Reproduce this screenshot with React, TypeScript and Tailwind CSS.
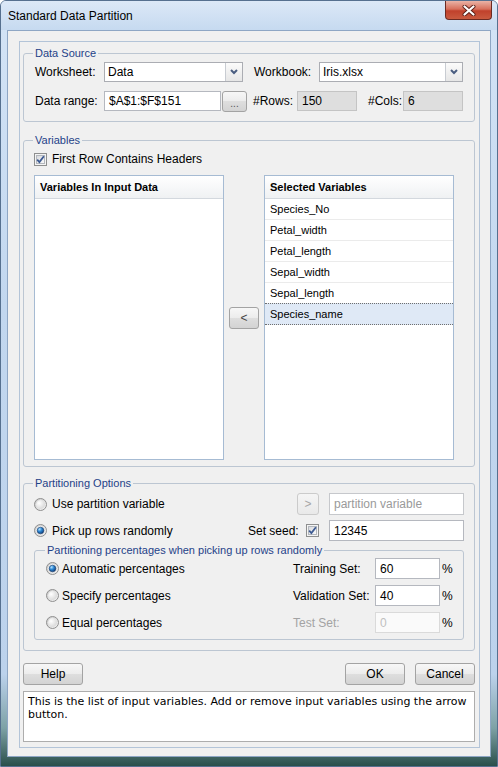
import React from "react";

function Radio({ checked }: { checked?: boolean }) {
  return (
    <svg width="13" height="13" viewBox="0 0 13 13" className="shrink-0">
      <defs>
        <linearGradient id="rbg" x1="0" y1="0" x2="1" y2="1">
          <stop offset="0" stopColor="#c9c9c9" />
          <stop offset="1" stopColor="#f6f6f6" />
        </linearGradient>
        <radialGradient id="rin" cx="0.35" cy="0.35" r="0.7">
          <stop offset="0" stopColor="#ffffff" />
          <stop offset="1" stopColor="#d9d9d9" />
        </radialGradient>
        <radialGradient id="rdot" cx="0.35" cy="0.3" r="0.75">
          <stop offset="0" stopColor="#b8e4ff" />
          <stop offset="0.45" stopColor="#2f8ad6" />
          <stop offset="1" stopColor="#0b3a78" />
        </radialGradient>
      </defs>
      <circle cx="6.5" cy="6.5" r="6" fill="url(#rbg)" stroke="#8f8f8f" />
      <circle cx="6.5" cy="6.5" r="4.4" fill="url(#rin)" />
      {checked && (
        <circle cx="6.5" cy="6.5" r="3.3" fill="url(#rdot)" stroke="#1b3d6c" strokeWidth="0.6" />
      )}
    </svg>
  );
}

function Check() {
  return (
    <svg width="13" height="13" viewBox="0 0 13 13" className="shrink-0">
      <defs>
        <linearGradient id="cbg" x1="0" y1="0" x2="1" y2="1">
          <stop offset="0" stopColor="#d6d8dc" />
          <stop offset="1" stopColor="#fbfbfb" />
        </linearGradient>
      </defs>
      <rect x="0.5" y="0.5" width="12" height="12" fill="#f4f4f4" stroke="#8e8f8f" />
      <rect x="2.5" y="2.5" width="8" height="8" fill="url(#cbg)" stroke="#b3b7bd" />
      <path d="M3.2 6.6 L5.4 9 L9.9 3.3" fill="none" stroke="#3d5a92" strokeWidth="1.8" />
    </svg>
  );
}

function Chevron() {
  return (
    <svg width="8" height="6" viewBox="0 0 8 6">
      <path d="M1 1 L4 4 L7 1" fill="none" stroke="#4a5d80" strokeWidth="2" />
    </svg>
  );
}

function Select({ className, value }: { className: string; value: string }) {
  return (
    <div className={`h-[20px] flex border border-[#abadb3] bg-white ${className}`}>
      <div className="flex-1 pl-[3px] leading-[18px]">{value}</div>
      <div className="w-[17px] h-full border-l border-[#c8ccd2] bg-[linear-gradient(to_bottom,#fbfbfb,#e6e6e6)] flex items-center justify-center">
        <Chevron />
      </div>
    </div>
  );
}

function Input({
  className,
  value,
  tone,
}: {
  className: string;
  value: string;
  tone?: "gray" | "placeholder" | "disabled";
}) {
  let cls = "bg-white border-[#b5b8bf] text-black";
  if (tone === "gray") cls = "bg-[#dedede] border-[#c4c4c4] text-black";
  if (tone === "placeholder") cls = "bg-white border-[#c6c8cc] text-[#9a9a9a]";
  if (tone === "disabled") cls = "bg-[#fafafa] border-[#dadada] text-[#c0c0c0]";
  return (
    <div className={`flex items-center border pl-[4px] ${cls} ${className}`}>{value}</div>
  );
}

function Btn({
  className,
  children,
  disabled,
}: {
  className: string;
  children: React.ReactNode;
  disabled?: boolean;
}) {
  const cls = disabled
    ? "border-[#cbcbcb] bg-[linear-gradient(to_bottom,#f5f5f5,#e9e9e9)] text-[#a6a6a6]"
    : "border-[#a3a3a3] bg-[linear-gradient(to_bottom,#f7f7f7_0%,#ececec_49%,#dedede_50%,#d3d3d3_100%)] text-black";
  return (
    <div className={`flex items-center justify-center rounded-[3px] border ${cls} ${className}`}>
      {children}
    </div>
  );
}

function ListBox({
  title,
  items,
  selected,
}: {
  title: string;
  items: string[];
  selected?: string;
}) {
  return (
    <div className="w-[190px] h-[285px] shrink-0 border border-[#a6bbd3] bg-white flex flex-col">
      <div className="h-[23px] shrink-0 border-b border-[#d3d8de] bg-[linear-gradient(to_bottom,#ffffff,#eff1f3)] flex items-center pl-[5px] font-bold text-[11px]">
        {title}
      </div>
      {items.map((it) =>
        it === selected ? (
          <div
            key={it}
            className="h-[22px] -mt-[1px] shrink-0 border-y border-dotted border-[#6f6f6f] bg-[#dfe9f6] flex items-center pl-[5px] text-[11px]"
          >
            {it}
          </div>
        ) : (
          <div
            key={it}
            className="h-[21px] shrink-0 border-b border-[#ebebeb] flex items-center pl-[5px] text-[11px]"
          >
            {it}
          </div>
        )
      )}
    </div>
  );
}

function Legend({ children }: { children: React.ReactNode }) {
  return (
    <legend className="ml-[9px] px-[2px] leading-[14px] text-[11px] text-[#1f4288]">{children}</legend>
  );
}

export default function App() {
  return (
    <div className="w-[498px] h-[767px] overflow-hidden rounded-t-[6px] border border-[#56708f] bg-[linear-gradient(to_bottom,#d4e4f6_0%,#c2d7ef_40%,#bcd2ec_88%,#7ea2a6_95%,#2a4f4b_100%)] font-['Liberation_Sans',Arial,sans-serif] text-[12px] text-black relative">
      {/* title bar */}
      <div className="h-[29px] flex items-center pl-[7px] bg-[linear-gradient(to_bottom,#dce8f7,#c6daf0)]">
        <span className="text-[12px] text-black">Standard Data Partition</span>
      </div>
      <div className="absolute top-0 right-[5px] w-[47px] h-[19px] rounded-b-[4px] border border-t-0 border-[#6b2a22] bg-[linear-gradient(to_bottom,#eab3a6_0%,#d7705c_45%,#c0412c_55%,#c95a3f_100%)] flex items-center justify-center">
        <svg width="14" height="11" viewBox="0 0 14 11">
          <path d="M2.5 1.5 L11.5 9.5 M11.5 1.5 L2.5 9.5" stroke="#5b1f17" strokeWidth="4" strokeLinecap="round" />
          <path d="M2.5 1.5 L11.5 9.5 M11.5 1.5 L2.5 9.5" stroke="#ffffff" strokeWidth="2.2" strokeLinecap="round" />
        </svg>
      </div>

      {/* client area */}
      <div className="mx-[6px] h-[727px] border border-[#8ea6c4] bg-[#f0f0f0] pt-[10px] pl-[11px] pr-[10px]">
        <div className="h-[707px] border border-[#b3c4d8] pl-[3px] pr-[4px] pt-[4px] flex flex-col">
          {/* Data Source */}
          <fieldset className="border border-[#bcc6d2] rounded-[3px] pb-[10px]">
            <Legend>Data Source</Legend>
            <div className="pl-[11px]">
              <div className="mt-[2px] h-[20px] flex items-center">
                <div className="w-[69px]">Worksheet:</div>
                <Select className="w-[139px]" value="Data" />
                <div className="ml-[11px] w-[65px]">Workbook:</div>
                <Select className="w-[144px]" value="Iris.xlsx" />
              </div>
              <div className="mt-[9px] h-[20px] flex items-center">
                <div className="w-[69px]">Data range:</div>
                <Input className="w-[117px] h-[20px]" value="$A$1:$F$151" />
                <Btn className="ml-[1px] w-[25px] h-[21px] rounded-[2px]">
                  <span className="text-[10px] leading-none pt-[6px] text-[#555]">...</span>
                </Btn>
                <div className="ml-[6px] w-[44px]">#Rows:</div>
                <Input className="w-[60px] h-[20px]" value="150" tone="gray" />
                <div className="ml-[11px] w-[35px]">#Cols:</div>
                <Input className="w-[60px] h-[20px]" value="6" tone="gray" />
              </div>
            </div>
          </fieldset>

          {/* Variables */}
          <fieldset className="mt-[11px] border border-[#bcc6d2] rounded-[3px] pb-[6px]">
            <Legend>Variables</Legend>
            <div className="pl-[10px]">
              <div className="mt-[5px] h-[14px] flex items-center">
                <Check />
                <span className="ml-[5px]">First Row Contains Headers</span>
              </div>
              <div className="mt-[9px] flex items-start">
                <ListBox title="Variables In Input Data" items={[]} />
                <Btn className="ml-[5px] mt-[132px] w-[30px] h-[22px]">
                  <span className="text-[12px] text-[#444]">&lt;</span>
                </Btn>
                <div className="ml-[5px]">
                  <ListBox
                    title="Selected Variables"
                    items={[
                      "Species_No",
                      "Petal_width",
                      "Petal_length",
                      "Sepal_width",
                      "Sepal_length",
                      "Species_name",
                    ]}
                    selected="Species_name"
                  />
                </div>
              </div>
            </div>
          </fieldset>

          {/* Partitioning Options */}
          <fieldset className="mt-[9px] border border-[#bcc6d2] rounded-[3px] pb-[10px]">
            <Legend>Partitioning Options</Legend>
            <div className="pl-[10px]">
              <div className="mt-[3px] h-[22px] flex items-center">
                <Radio />
                <span className="ml-[5px] w-[245px]">Use partition variable</span>
                <Btn className="w-[22px] h-[22px]" disabled>
                  <span className="text-[12px]">&gt;</span>
                </Btn>
                <Input className="ml-[10px] w-[135px] h-[22px]" value="partition variable" tone="placeholder" />
              </div>
              <div className="mt-[5px] h-[21px] flex items-center">
                <Radio checked />
                <span className="ml-[5px] w-[196px]">Pick up rows randomly</span>
                <span className="w-[58px]">Set seed:</span>
                <Check />
                <Input className="ml-[10px] w-[135px] h-[21px]" value="12345" />
              </div>
              <fieldset className="mt-[2px] w-[430px] border border-[#bcc6d2] rounded-[3px] pb-[6px]">
                <legend className="ml-[10px] px-[2px] leading-[14px] text-[11px] text-[#1f4288]">
                  Partitioning percentages when picking up rows randomly
                </legend>
                <div className="pl-[11px] pt-[1px]">
                  <div className="h-[21px] flex items-center">
                    <Radio checked />
                    <span className="ml-[3px] w-[231px]">Automatic percentages</span>
                    <span className="w-[82px]">Training Set:</span>
                    <Input className="w-[65px] h-[21px]" value="60" />
                    <span className="ml-[2px]">%</span>
                  </div>
                  <div className="mt-[6px] h-[21px] flex items-center">
                    <Radio />
                    <span className="ml-[3px] w-[231px]">Specify percentages</span>
                    <span className="w-[82px]">Validation Set:</span>
                    <Input className="w-[65px] h-[21px]" value="40" />
                    <span className="ml-[2px]">%</span>
                  </div>
                  <div className="mt-[6px] h-[21px] flex items-center">
                    <Radio />
                    <span className="ml-[3px] w-[231px]">Equal percentages</span>
                    <span className="w-[82px] text-[#a3a3a3]">Test Set:</span>
                    <Input className="w-[65px] h-[21px]" value="0" tone="disabled" />
                    <span className="ml-[2px]">%</span>
                  </div>
                </div>
              </fieldset>
            </div>
          </fieldset>

          {/* Buttons */}
          <div className="mt-[12px] h-[22px] flex">
            <Btn className="w-[60px] h-[22px]">Help</Btn>
            <Btn className="ml-auto w-[60px] h-[22px]">OK</Btn>
            <Btn className="ml-[10px] w-[60px] h-[22px]">Cancel</Btn>
          </div>

          {/* Description */}
          <div className="mt-[6px] h-[51px] border border-[#adadad] bg-white pl-[4px] pr-[6px] pt-[3px] font-['DejaVu_Sans',Verdana,sans-serif] text-[11px] leading-[13px]">
            This is the list of input variables. Add or remove input variables using the arrow button.
          </div>
        </div>
      </div>
    </div>
  );
}
